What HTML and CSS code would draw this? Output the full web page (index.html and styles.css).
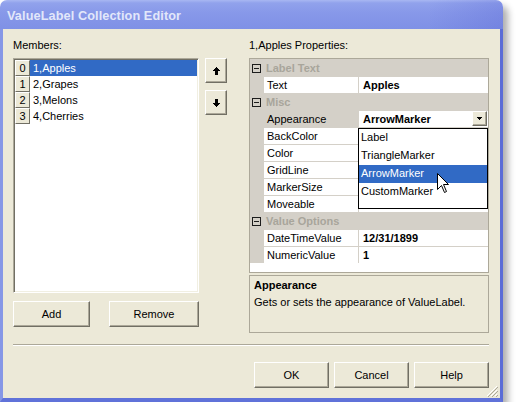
FILE: index.html
```html
<!DOCTYPE html>
<html>
<head>
<meta charset="utf-8">
<title>ValueLabel Collection Editor</title>
<link rel="stylesheet" href="styles.css">
</head>
<body>
<div class="window">
  <div class="titlebar"><span class="title">ValueLabel Collection Editor</span></div>
  <div class="frame">
    <div class="client">
      <div class="main">
        <div class="col-left">
          <div class="label">Members:</div>
          <div class="listbox">
            <div class="item selected"><span class="idx">0</span><span class="txt">1,Apples</span></div>
            <div class="item"><span class="idx">1</span><span class="txt">2,Grapes</span></div>
            <div class="item"><span class="idx">2</span><span class="txt">3,Melons</span></div>
            <div class="item"><span class="idx">3</span><span class="txt">4,Cherries</span></div>
          </div>
          <div class="left-buttons">
            <button class="btn btn-add">Add</button>
            <button class="btn btn-remove">Remove</button>
          </div>
        </div>
        <div class="col-mid">
          <button class="btn btn-arrow" aria-label="Move up">
            <svg width="7" height="8" viewBox="0 0 7 8" shape-rendering="crispEdges"><rect x="3" y="0" width="1" height="1"/><rect x="2" y="1" width="3" height="1"/><rect x="1" y="2" width="5" height="1"/><rect x="0" y="3" width="7" height="1"/><rect x="2" y="4" width="3" height="4"/></svg>
          </button>
          <button class="btn btn-arrow" aria-label="Move down">
            <svg width="7" height="8" viewBox="0 0 7 8" shape-rendering="crispEdges"><rect x="2" y="0" width="3" height="4"/><rect x="0" y="4" width="7" height="1"/><rect x="1" y="5" width="5" height="1"/><rect x="2" y="6" width="3" height="1"/><rect x="3" y="7" width="1" height="1"/></svg>
          </button>
        </div>
        <div class="col-right">
          <div class="label">1,Apples Properties:</div>
          <div class="pgrid">
            <div class="rows">
              <div class="cat"><span class="minus"></span>Label Text</div>
              <div class="prop"><span class="margin"></span><span class="name">Text</span><span class="value">Apples</span></div>
              <div class="cat"><span class="minus"></span>Misc</div>
              <div class="prop sel"><span class="margin"></span><span class="name">Appearance</span><span class="value">ArrowMarker<span class="ddbtn"><svg width="5" height="3" viewBox="0 0 5 3" shape-rendering="crispEdges"><rect x="0" y="0" width="5" height="1"/><rect x="1" y="1" width="3" height="1"/><rect x="2" y="2" width="1" height="1"/></svg></span></span></div>
              <div class="prop"><span class="margin"></span><span class="name">BackColor</span><span class="value"></span></div>
              <div class="prop"><span class="margin"></span><span class="name">Color</span><span class="value"></span></div>
              <div class="prop"><span class="margin"></span><span class="name">GridLine</span><span class="value"></span></div>
              <div class="prop"><span class="margin"></span><span class="name">MarkerSize</span><span class="value"></span></div>
              <div class="prop"><span class="margin"></span><span class="name">Moveable</span><span class="value"></span></div>
              <div class="cat"><span class="minus"></span>Value Options</div>
              <div class="prop"><span class="margin"></span><span class="name">DateTimeValue</span><span class="value">12/31/1899</span></div>
              <div class="prop"><span class="margin"></span><span class="name">NumericValue</span><span class="value">1</span></div>
            </div>
            <div class="dropdown">
              <div class="dd-item">Label</div>
              <div class="dd-item">TriangleMarker</div>
              <div class="dd-item dd-sel">ArrowMarker</div>
              <div class="dd-item">CustomMarker</div>
            </div>
            <svg class="cursor" width="12" height="20" viewBox="0 0 12 20"><path d="M0.5 0.5 L0.5 16.5 L4.5 12.5 L7.5 19.5 L9.5 18.5 L6.5 11.5 L11.5 11.5 Z" fill="#fff" stroke="#000" stroke-width="1" stroke-linejoin="miter"/></svg>
          </div>
          <div class="desc">
            <div class="desc-title">Appearance</div>
            <div class="desc-text">Gets or sets the appearance of ValueLabel.</div>
          </div>
        </div>
      </div>
      <div class="separator"></div>
      <div class="bottom-buttons">
        <button class="btn btn-dlg">OK</button>
        <button class="btn btn-dlg">Cancel</button>
        <button class="btn btn-dlg">Help</button>
      </div>
      <svg class="grip" width="12" height="12" viewBox="0 0 12 12">
        <line x1="11" y1="1" x2="1" y2="11" stroke="#fff"/>
        <line x1="12" y1="2" x2="2" y2="12" stroke="#aca899"/>
        <line x1="11" y1="5" x2="5" y2="11" stroke="#fff"/>
        <line x1="12" y1="6" x2="6" y2="12" stroke="#aca899"/>
        <line x1="11" y1="9" x2="9" y2="11" stroke="#fff"/>
        <line x1="12" y1="10" x2="10" y2="12" stroke="#aca899"/>
      </svg>
    </div>
  </div>
</div>
</body>
</html>
```

FILE: styles.css
```css
* { box-sizing: border-box; }

body {
  margin: 0;
  background: #fff;
  font-family: "Liberation Sans", Arial, sans-serif;
  font-size: 11px;
  color: #000;
}

.window {
  width: 503px;
  height: 402px;
  display: flex;
  flex-direction: column;
  border-radius: 7px 7px 0 0;
  box-shadow: 5px 6px 7px rgba(0, 0, 0, 0.32);
}

.titlebar {
  height: 29px;
  flex: none;
  display: flex;
  align-items: center;
  padding: 3px 0 0 7px;
  border-radius: 7px 7px 0 0;
  background:
    linear-gradient(to right, rgba(255,255,255,0) 85%, rgba(60,70,200,0.18) 100%),
    linear-gradient(to bottom, #a8b7f2 0, #91a2ec 3px, #8798e9 45%, #7f91e6 100%);
}

.title {
  font-family: "Liberation Sans", Arial, sans-serif;
  font-weight: bold;
  font-size: 12.7px;
  color: #e2e7fa;
  letter-spacing: 0.1px;
}

.frame {
  flex: 1;
  display: flex;
  border-left: 3px solid #8697e6;
  border-right: 3px solid #5a6cd7;
  border-bottom: 4px solid #6072d9;
}

.client {
  flex: 1;
  position: relative;
  display: flex;
  flex-direction: column;
  background: #ece9d8;
  padding: 10px 11px 0 10px;
}

.main {
  display: flex;
  height: 294px;
}

.label {
  height: 13px;
  line-height: 13px;
  margin-bottom: 6px;
}

/* left column */
.col-left {
  width: 186px;
  display: flex;
  flex-direction: column;
}

.listbox {
  height: 235px;
  background: #fff;
  border: 1px solid;
  border-color: #aca899 #fff #fff #aca899;
  box-shadow: inset 1px 1px #716f64, inset -1px -1px #f1efe2;
  padding: 1px;
}

.item {
  display: flex;
  height: 16px;
}

.idx {
  width: 15px;
  height: 16px;
  background: #ece9d8;
  border: 1px solid;
  border-color: #fff #716f64 #716f64 #fff;
  text-align: center;
  line-height: 14px;
}

.txt {
  flex: 1;
  padding-left: 3px;
  line-height: 16px;
}

.selected .txt {
  background: #316ac5;
  color: #fff;
}

.left-buttons {
  display: flex;
  gap: 19px;
  margin-top: 8px;
}

.btn {
  font-family: "Liberation Sans", Arial, sans-serif;
  font-size: 11px;
  color: #000;
  background: #ece9d8;
  border: 1px solid;
  border-color: #fff #716f64 #716f64 #fff;
  box-shadow: inset -1px -1px #aca899;
  padding: 0;
  height: 26px;
}

.btn-add { width: 77px; }
.btn-remove { width: 90px; }

/* middle column */
.col-mid {
  width: 22px;
  margin-left: 6px;
  padding-top: 19px;
  display: flex;
  flex-direction: column;
  gap: 7px;
}

.btn-arrow {
  width: 22px;
  height: 25px;
  display: flex;
  align-items: center;
  justify-content: center;
}

.btn-arrow svg { fill: #000; }

/* right column */
.col-right {
  width: 240px;
  margin-left: 22px;
}

.pgrid {
  position: relative;
  height: 215px;
  border: 1px solid #aca899;
  background: #fff;
}

.rows {
  background: #d4d0c8;
  padding-top: 1px;
}

.cat {
  height: 16px;
  margin-bottom: 1px;
  display: flex;
  align-items: center;
  font-weight: bold;
  color: #a8a59b;
}

.minus {
  position: relative;
  width: 9px;
  height: 9px;
  border: 1px solid #1c1c1c;
  margin: 0 5px 0 2px;
}

.minus::after {
  content: "";
  position: absolute;
  left: 1px;
  right: 1px;
  top: 3px;
  height: 1px;
  background: #1c1c1c;
}

.prop {
  display: flex;
  height: 16px;
  margin-bottom: 1px;
}

.margin { width: 14px; }

.name {
  width: 94px;
  background: #fff;
  padding-left: 3px;
  line-height: 16px;
  white-space: nowrap;
}

.prop.sel .name { background: #d4d0c8; }

.value {
  position: relative;
  width: 129px;
  margin-left: 1px;
  background: #fff;
  padding-left: 4px;
  line-height: 16px;
  font-weight: bold;
  white-space: nowrap;
}

.ddbtn {
  position: absolute;
  right: 1px;
  top: 0;
  width: 15px;
  height: 15px;
  display: flex;
  align-items: center;
  justify-content: center;
  background: #ece9d8;
  border: 1px solid;
  border-color: #fff #716f64 #716f64 #fff;
  box-shadow: inset -1px -1px #aca899;
}

.ddbtn svg { fill: #000; }

.dropdown {
  position: absolute;
  left: 108px;
  top: 69px;
  width: 130px;
  height: 81px;
  background: #fff;
  border: 1px solid #000;
}

.dd-item {
  height: 18px;
  line-height: 16px;
  padding-left: 2px;
}

.dd-sel {
  background: #316ac5;
  color: #fff;
}

.cursor {
  position: absolute;
  left: 187px;
  top: 114px;
}

.desc {
  height: 58px;
  margin-top: 2px;
  border: 1px solid #aca899;
  padding: 2px 0 0 4px;
}

.desc-title {
  font-weight: bold;
  line-height: 14px;
}

.desc-text {
  margin-top: 3px;
  line-height: 14px;
}

/* bottom */
.separator {
  margin-top: 11px;
  height: 2px;
  border-top: 1px solid #aca899;
  border-bottom: 1px solid #fff;
}

.bottom-buttons {
  display: flex;
  justify-content: flex-end;
  gap: 5px;
  margin-top: 16px;
}

.btn-dlg { width: 75px; }

.grip {
  position: absolute;
  right: 2px;
  bottom: 1px;
}
```
